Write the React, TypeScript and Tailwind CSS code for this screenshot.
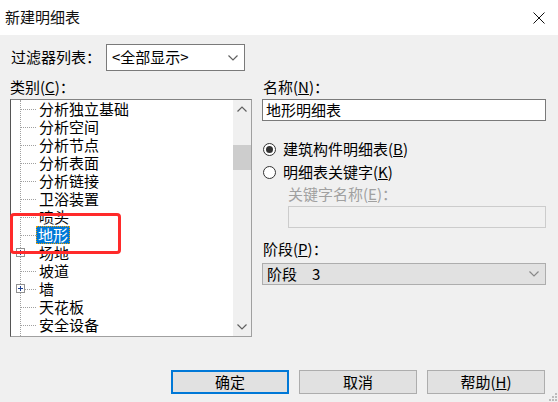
import React from "react";

const items = [
  { label: "分析独立基础" },
  { label: "分析空间" },
  { label: "分析节点" },
  { label: "分析表面" },
  { label: "分析链接" },
  { label: "卫浴装置" },
  { label: "喷头" },
  { label: "地形", selected: true },
  { label: "场地", box: true },
  { label: "坡道" },
  { label: "墙", box: true },
  { label: "天花板" },
  { label: "安全设备" },
  { label: "家具" },
];

const Chevron = ({ up = false, color = "#606060" }: { up?: boolean; color?: string }) => (
  <svg width="10" height="6" viewBox="0 0 10 6" className={up ? "rotate-180" : ""}>
    <path d="M0.5 0.5 L5 5 L9.5 0.5" fill="none" stroke={color} strokeWidth="1.2" />
  </svg>
);

const TreeRow = ({ label, selected, box }: { label: string; selected?: boolean; box?: boolean }) => (
  <div className="relative h-[18px] flex items-center">
    <span className="ml-[10px] w-[15px] border-t border-dotted border-[#a0a0a0]" />
    {box && (
      <span className="absolute left-[5px] top-[4px] w-[9px] h-[9px] border border-[#919191] bg-white flex items-center justify-center">
        <svg width="7" height="7" viewBox="0 0 7 7">
          <path d="M1 3.5 H6 M3.5 1 V6" stroke="#1f3f8f" strokeWidth="1" />
        </svg>
      </span>
    )}
    <span
      className={
        selected
          ? "px-[2px] h-[18px] leading-[18px] bg-[#0078d7] text-white outline outline-1 outline-dotted outline-[#f0a000] -outline-offset-1"
          : "ml-[3px] leading-[18px]"
      }
    >
      {label}
    </span>
  </div>
);

const Radio = ({ checked, label, hot }: { checked?: boolean; label: string; hot: string }) => (
  <div className="flex items-center h-[23px]">
    <span className="w-[13px] h-[13px] rounded-full border border-[#333] bg-white flex items-center justify-center">
      {checked && <span className="w-[7px] h-[7px] rounded-full bg-[#333]" />}
    </span>
    <span className="ml-[7px]">
      {label}(<span className="underline">{hot}</span>)
    </span>
  </div>
);

const Button = ({ children, primary }: { children: React.ReactNode; primary?: boolean }) => (
  <div
    className={`w-[118px] h-[24px] bg-[#e1e1e1] flex items-center justify-center ${
      primary ? "border-2 border-[#0078d7]" : "border border-[#adadad]"
    }`}
  >
    {children}
  </div>
);

export default function App() {
  return (
    <div className="w-[558px] h-[402px] bg-[#f0f0f0] relative overflow-hidden text-[15px] text-black font-['Noto_Sans_CJK_SC',sans-serif]">
      {/* title bar */}
      <div className="h-[35px] bg-white flex items-center justify-between pl-[5px] pr-[13px]">
        <span className="text-[15px] text-[#111]">新建明细表</span>
        <svg width="12" height="12" viewBox="0 0 12 12">
          <path d="M0.5 0.5 L11.5 11.5 M11.5 0.5 L0.5 11.5" stroke="#111" strokeWidth="1" />
        </svg>
      </div>

      {/* filter */}
      <div className="flex items-center mt-[9px] pl-[11px] h-[27px]">
        <span className="w-[95px]">过滤器列表：</span>
        <div className="w-[139px] h-[27px] border border-[#7a7a7a] bg-white flex items-center justify-between pl-[5px] pr-[6px]">
          <span>&lt;全部显示&gt;</span>
          <Chevron />
        </div>
      </div>

      <div className="flex mt-[6px] pl-[10px]">
        {/* left column */}
        <div className="w-[242px] flex flex-col">
          <div className="h-[22px] leading-[20px]">
            类别(<span className="underline">C</span>)：
          </div>
          <div className="relative h-[238px] bg-white border border-[#a0a0a0] border-l-[#555] border-t-[#828282] flex overflow-hidden">
            <div className="relative flex-1 overflow-hidden">
              <div className="absolute left-[9px] top-0 bottom-0 border-l border-dotted border-[#a0a0a0]" />
              <div className="flex flex-col">
                {items.map((it) => (
                  <TreeRow key={it.label} {...it} />
                ))}
              </div>
            </div>
            <div className="w-[18px] bg-[#f0f0f0] flex flex-col items-center">
              <div className="h-[18px] flex items-center justify-center">
                <Chevron up />
              </div>
              <div className="mt-[27px] w-[18px] h-[25px] bg-[#cdcdcd]" />
              <div className="flex-1" />
              <div className="h-[18px] flex items-center justify-center">
                <Chevron />
              </div>
            </div>
          </div>
        </div>

        {/* right column */}
        <div className="ml-[10px] w-[284px] flex flex-col">
          <div className="h-[22px] leading-[20px] pl-[1px]">
            名称(<span className="underline">N</span>)：
          </div>
          <div className="h-[22px] border border-[#7a7a7a] bg-white flex items-center pl-[3px]">地形明细表</div>
          <div className="mt-[17px] pl-[1px]">
            <Radio checked label="建筑构件明细表" hot="B" />
            <Radio label="明细表关键字" hot="K" />
          </div>
          <div className="pl-[26px] text-[#a0a0a0] h-[22px] leading-[20px]">
            关键字名称(<span className="underline">E</span>)：
          </div>
          <div className="ml-[26px] h-[22px] border border-[#cccccc] bg-[#f0f0f0]" />
          <div className="mt-[11px] h-[24px] leading-[20px] pl-[1px]">
            阶段(<span className="underline">P</span>)：
          </div>
          <div className="h-[22px] border border-[#adadad] bg-[#e1e1e1] flex items-center justify-between pl-[4px] pr-[6px]">
            <span className="whitespace-pre">阶段　3</span>
            <Chevron color="#888" />
          </div>
        </div>
      </div>

      {/* buttons */}
      <div className="flex gap-[10px] pl-[171px] mt-[33px]">
        <Button primary>确定</Button>
        <Button>取消</Button>
        <Button>
          帮助(<span className="underline">H</span>)
        </Button>
      </div>

      {/* resize grip */}
      <svg className="absolute right-[1px] bottom-[1px]" width="10" height="10" viewBox="0 0 10 10">
        <rect x="8" y="2" width="2" height="2" fill="#bcbcbc" />
        <rect x="5" y="5" width="2" height="2" fill="#bcbcbc" />
        <rect x="8" y="5" width="2" height="2" fill="#bcbcbc" />
        <rect x="2" y="8" width="2" height="2" fill="#bcbcbc" />
        <rect x="5" y="8" width="2" height="2" fill="#bcbcbc" />
        <rect x="8" y="8" width="2" height="2" fill="#bcbcbc" />
      </svg>

      {/* red annotation */}
      <div className="absolute left-[10px] top-[213px] w-[111px] h-[41px] border-[3px] border-[#ff2a2a] rounded-[4px]" />
    </div>
  );
}
